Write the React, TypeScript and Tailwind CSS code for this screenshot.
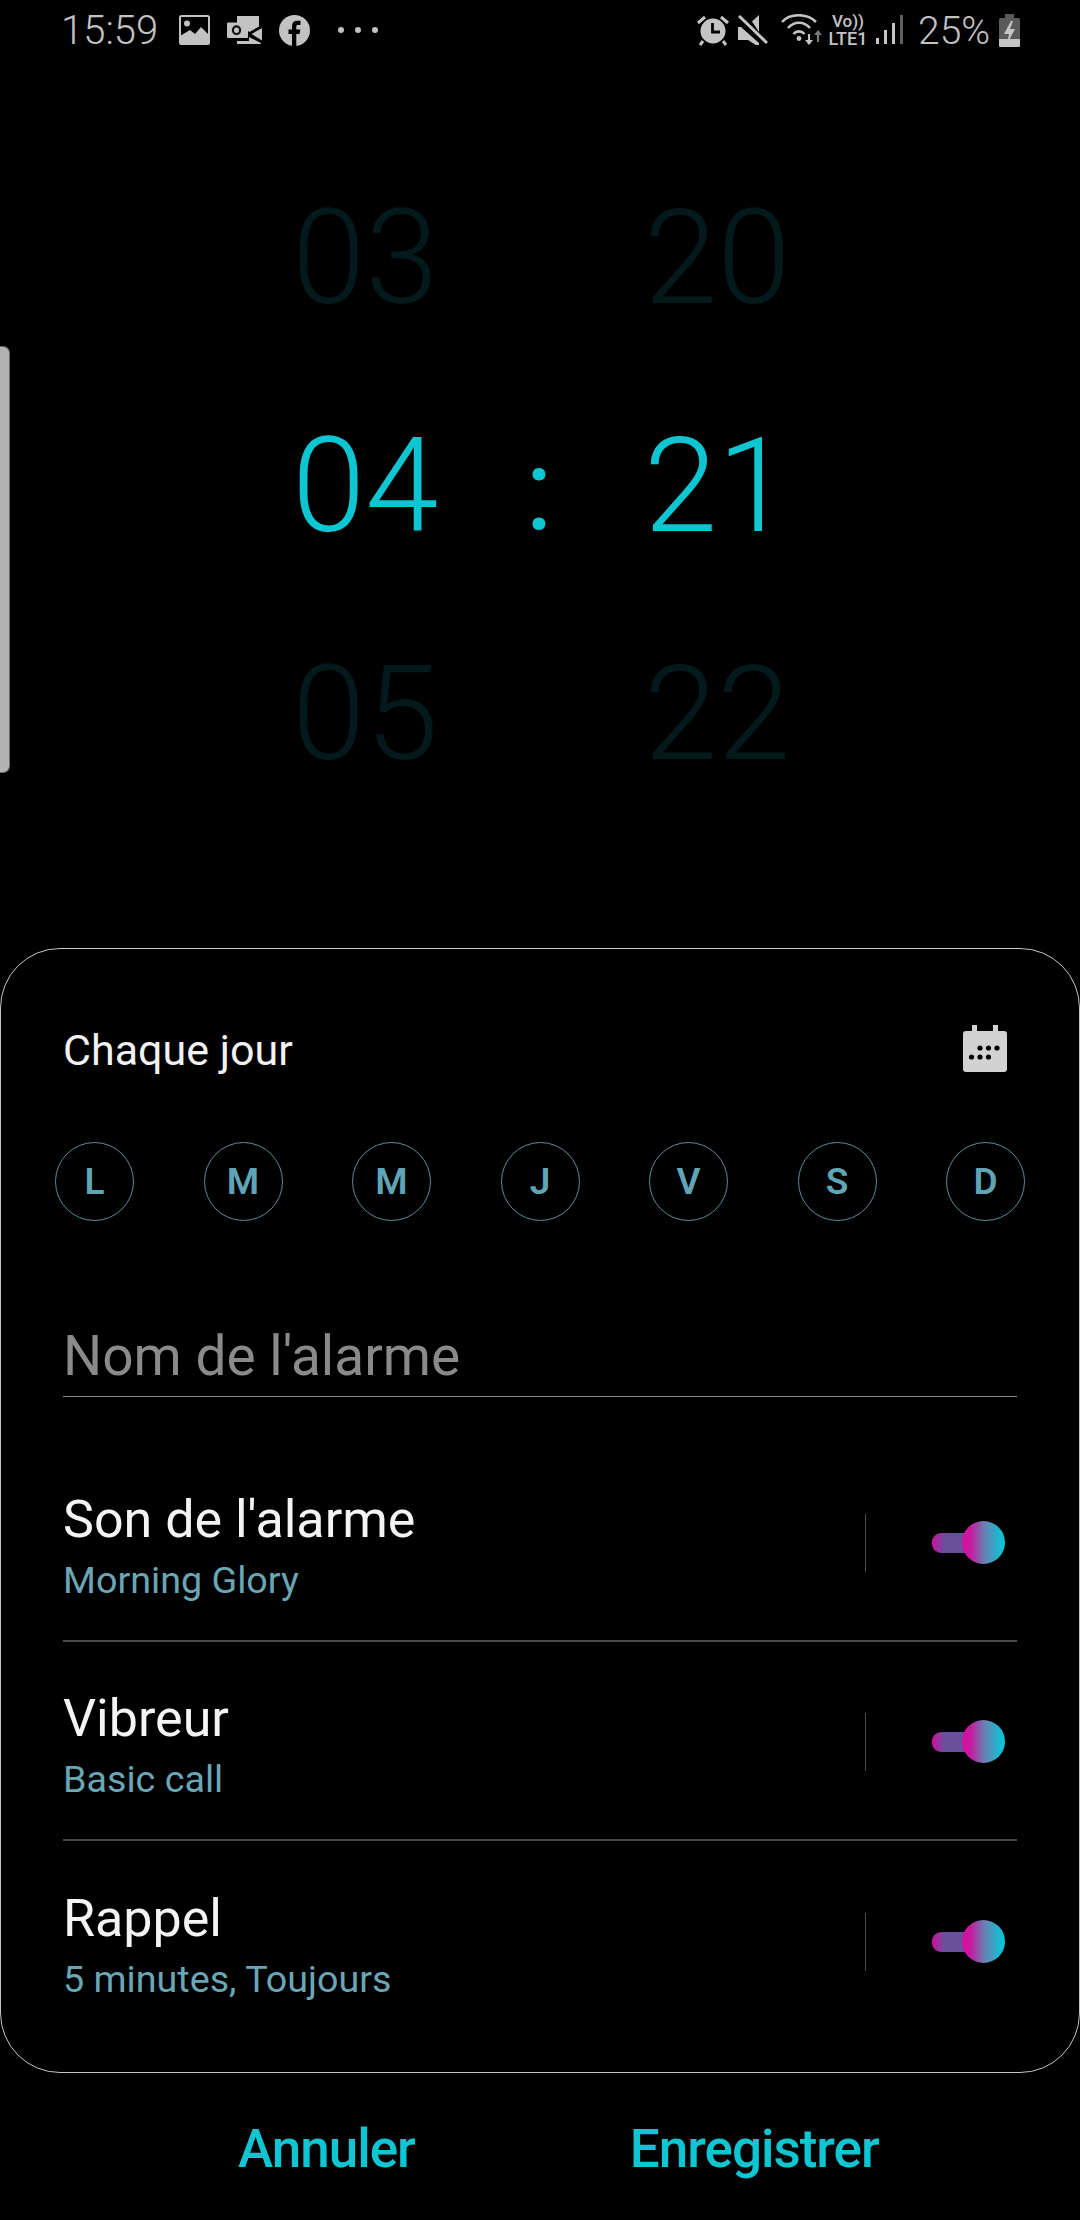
import React from "react";

const font = { fontFamily: "Roboto, 'Noto Sans', sans-serif" };

function PictureIcon() {
  return (
    <svg width="31" height="30" viewBox="0 0 31 30" className="block">
      <rect x="1" y="1" width="29" height="28" rx="1.5" fill="none" stroke="#c2c2c2" strokeWidth="2" />
      <circle cx="8" cy="8.5" r="3" fill="#c2c2c2" />
      <path d="M1 21 L11 15 L16 19 L22 12 L30 20 V29 H1 Z" fill="#c2c2c2" />
    </svg>
  );
}

function OutlookIcon() {
  return (
    <svg width="36" height="28" viewBox="0 0 36 28" className="block">
      <path d="M10 0 H32 V10.5 L22.5 16 L10 8 Z" fill="#c2c2c2" />
      <path d="M35 12 L24.5 18 L35 24.5 Z" fill="#c2c2c2" />
      <path d="M10 25 H22 V21 L34 27 V28 H10 Z" fill="#c2c2c2" />
      <rect x="0" y="6.5" width="21" height="15.5" rx="1" fill="#c2c2c2" />
      <ellipse cx="9.5" cy="14.2" rx="3.6" ry="3.8" fill="none" stroke="#111" strokeWidth="2.2" />
    </svg>
  );
}

function FacebookIcon() {
  return (
    <svg width="31" height="31" viewBox="0 0 31 31" className="block">
      <circle cx="15.5" cy="15.5" r="15.5" fill="#c2c2c2" />
      <path d="M13 31 V19 H9.5 V14.5 H13 V11 C13 7.5 15 5.8 18 5.8 H21.5 V10 H19 C17.8 10 17.3 10.6 17.3 11.8 V14.5 H21.3 L20.6 19 H17.3 V31 Z" fill="#000" />
    </svg>
  );
}

function AlarmIcon() {
  return (
    <svg width="32" height="32" viewBox="0 0 32 32" className="block">
      <circle cx="16" cy="17" r="12.5" fill="#c4c4c4" />
      <path d="M1 9 L8 3 M31 9 L24 3 M6 27 L3 31 M26 27 L29 31" stroke="#c4c4c4" strokeWidth="3" />
      <path d="M15.5 9 V18 H23" stroke="#000" strokeWidth="2.8" fill="none" />
    </svg>
  );
}

function MuteIcon() {
  return (
    <svg width="30" height="30" viewBox="0 0 30 30" className="block">
      <path d="M14 6.5 L21 0 V17 Z" fill="#c4c4c4" />
      <path d="M0 12 H3 L21 28 V32 L10 25 H0 Z" fill="#c4c4c4" />
      <path d="M1 1 L29 28" stroke="#c4c4c4" strokeWidth="3" />
    </svg>
  );
}

function WifiIcon() {
  return (
    <svg width="42" height="32" viewBox="0 0 42 32" className="block">
      <g fill="none" stroke="#c4c4c4" strokeWidth="2.6">
        <path d="M1 8 C9 -1 26 -1 35 8" />
        <path d="M7 14 C13 7 23 7 29 14" />
        <path d="M12.5 20 C15.5 16.5 20.5 16.5 23.5 20" />
      </g>
      <circle cx="18" cy="24.5" r="2.4" fill="#c4c4c4" />
      <path d="M28 20 V30" stroke="#c4c4c4" strokeWidth="2.2" />
      <path d="M24 26 L28 31 L32 26 Z" fill="#c4c4c4" />
      <path d="M37 18 V28" stroke="#7a7a7a" strokeWidth="2.2" />
      <path d="M33 21 L37 16 L41 21 Z" fill="#7a7a7a" />
    </svg>
  );
}

function SignalIcon() {
  return (
    <svg width="28" height="30" viewBox="0 0 28 30" className="block">
      <rect x="0" y="23" width="3" height="6" fill="#c4c4c4" />
      <rect x="8" y="15" width="3" height="14" fill="#c4c4c4" />
      <rect x="16" y="8" width="3" height="21" fill="#c4c4c4" />
      <rect x="24" y="0" width="3" height="29" fill="#5f5f5f" />
    </svg>
  );
}

function BatteryIcon() {
  return (
    <svg width="21" height="33" viewBox="0 0 21 33" className="block">
      <path d="M6 0 H15 V4 H6 Z" fill="#5a5a5a" />
      <rect x="0" y="4" width="21" height="29" rx="1.5" fill="#5a5a5a" />
      <path d="M0 25 H21 V31.5 A1.5 1.5 0 0 1 19.5 33 H1.5 A1.5 1.5 0 0 1 0 31.5 Z" fill="#c4c4c4" />
      <path d="M12 7 L5 20 H10 L8 30 L16 15 H11 L14 7 Z" fill="#c4c4c4" />
    </svg>
  );
}

function CalendarIcon() {
  return (
    <svg width="44" height="47" viewBox="0 0 44 47" className="block">
      <path d="M9 0 H14 V6 H30 V0 H35 V6 H41 A3 3 0 0 1 44 9 V44 A3 3 0 0 1 41 47 H3 A3 3 0 0 1 0 44 V9 A3 3 0 0 1 3 6 H9 Z" fill="#d2d2d2" />
      <g fill="#000">
        <circle cx="17" cy="23" r="2.6" />
        <circle cx="25.5" cy="23" r="2.6" />
        <circle cx="34" cy="23" r="2.6" />
        <circle cx="8.5" cy="32" r="2.6" />
        <circle cx="17" cy="32" r="2.6" />
        <circle cx="25.5" cy="32" r="2.6" />
      </g>
    </svg>
  );
}

function Toggle() {
  return (
    <div className="relative w-[73px] h-[43px] flex items-center">
      <div className="w-[56px] h-[20px] rounded-l-[9px] bg-[linear-gradient(90deg,#d00fa0_0%,#6a4f9c_22%,#66509a_100%)]" />
      <div className="absolute right-0 top-0 w-[43px] h-[43px] rounded-full bg-[linear-gradient(90deg,#dc0c9e_0%,#c71aa2_20%,#6f7cb0_50%,#14bed2_90%,#0cc5d6_100%)]" />
    </div>
  );
}

function Row({ title, sub, divider }: { title: string; sub: string; divider: boolean }) {
  return (
    <div className={`h-[199px] flex items-center mx-[62px] ${divider ? "border-b-2 border-[#4a4a4a]" : ""}`}>
      <div className="flex-1 flex flex-col mt-[16px]">
        <div className="text-[52px] leading-[60px] text-[#f4f4f4] mt-[-6px]">{title}</div>
        <div className="text-[37.7px] leading-[48px] text-[#6aa6b5] mt-[6px]">{sub}</div>
      </div>
      <div className="w-[1px] h-[58px] bg-[#4a4a4a] mr-[66px] mt-[2px]" />
      <div className="mr-[12px] mt-[2px]">
        <Toggle />
      </div>
    </div>
  );
}

function Digit({ value, active }: { value: string; active?: boolean }) {
  return (
    <div
      className={`h-[228px] w-[150px] flex items-center text-[132px] leading-none font-light ${
        active ? "text-[#0dc6d2]" : "text-[#03191b]"
      }`}
    >
      {value}
    </div>
  );
}

export default function App() {
  const days = ["L", "M", "M", "J", "V", "S", "D"];
  return (
    <div className="relative w-[1080px] h-[2220px] bg-black overflow-hidden" style={font}>
      {/* status bar */}
      <div className="h-[60px] flex items-center text-[#c2c2c2]">
        <div className="ml-[61px] w-[118px] text-[40px] font-light leading-none mt-[2px]">15:59</div>
        <PictureIcon />
        <div className="ml-[17px] mt-[-1px]"><OutlookIcon /></div>
        <div className="ml-[16px]"><FacebookIcon /></div>
        <div className="ml-[28px] flex gap-[11px]">
          <span className="block w-[6px] h-[6px] rounded-full bg-[#c2c2c2]" />
          <span className="block w-[6px] h-[6px] rounded-full bg-[#c2c2c2]" />
          <span className="block w-[6px] h-[6px] rounded-full bg-[#c2c2c2]" />
        </div>
        <div className="ml-auto mr-[60px] flex items-center">
          <AlarmIcon />
          <div className="ml-[9px]"><MuteIcon /></div>
          <div className="ml-[13px]"><WifiIcon /></div>
          <div className="ml-[5px] w-[40px] flex flex-col items-center font-medium text-[#c4c4c4]">
            <span className="text-[17px] leading-[17px]">Vo))</span>
            <span className="text-[18px] leading-[17px]">LTE1</span>
          </div>
          <div className="ml-[8px]"><SignalIcon /></div>
          <div className="ml-[14px] w-[76px] text-[39px] font-light leading-none mt-[2px]">25%</div>
          <div className="ml-[5px]"><BatteryIcon /></div>
        </div>
      </div>

      {/* side handle */}
      <div className="absolute left-0 top-[346px] w-[10px] h-[427px] bg-[#b3b3b3] border-r border-y border-[#6a6a6a] rounded-r-[7px]" />

      {/* time picker */}
      <div className="h-[888px] pt-[84px] pl-[292px] flex">
        <div className="flex flex-col">
          <Digit value="03" />
          <Digit value="04" active />
          <Digit value="05" />
        </div>
        <div className="w-[202px] h-[684px] pr-[8px] flex items-center justify-center text-[#0dc6d2] text-[115px] font-normal leading-none">
          <span className="mt-[6px]">:</span>
        </div>
        <div className="flex flex-col">
          <Digit value="20" />
          <Digit value="21" active />
          <Digit value="22" />
        </div>
      </div>

      {/* card */}
      <div className="h-[1125px] border border-[#c4c4c4] rounded-[60px] box-border">
        <div className="flex items-center justify-between pl-[62px] pr-[72px] pt-[74px] h-[124px]">
          <span className="text-[43px] leading-none text-[#f2f2f2] mt-[4px]">Chaque jour</span>
          <CalendarIcon />
        </div>
        <div className="flex justify-between pl-[54px] pr-[54px] mt-[69px]">
          {days.map((d, i) => (
            <div
              key={i}
              className="w-[79px] h-[79px] rounded-full border border-[#5a8c98] flex items-center justify-center text-[37px] font-semibold text-[#5fa5b6] leading-none"
            >
              {d}
            </div>
          ))}
        </div>
        <div className="mx-[62px] mt-[66px] h-[110px] border-b border-[#8a8a8a] flex items-end pb-[5px]">
          <span className="text-[55px] leading-[70px] text-[#8a8a8a]">Nom de l'alarme</span>
        </div>
        <div className="mt-[46px]">
          <Row title="Son de l'alarme" sub="Morning Glory" divider />
          <Row title="Vibreur" sub="Basic call" divider />
          <Row title="Rappel" sub="5 minutes, Toujours" divider={false} />
        </div>
      </div>

      {/* buttons */}
      <div className="flex mt-[41px] text-[53px] font-medium leading-[70px] tracking-[-1px] text-[#0dc6d2]">
        <span className="ml-[238px]">Annuler</span>
        <span className="ml-[215px]">Enregistrer</span>
      </div>
    </div>
  );
}
